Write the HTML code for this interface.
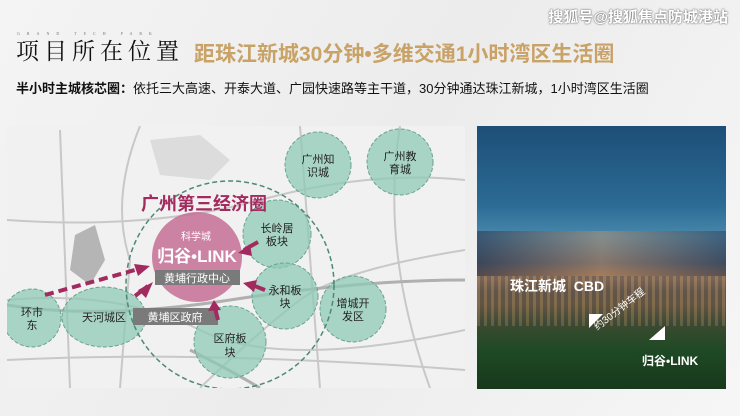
<!DOCTYPE html>
<html><head><meta charset="utf-8"><style>
*{margin:0;padding:0;box-sizing:border-box}
body{width:740px;height:416px;overflow:hidden;background:linear-gradient(120deg,#f4f4f4,#ececec 50%,#f6f6f6);font-family:"Liberation Sans","Noto Sans CJK SC",sans-serif;position:relative}
.wm{position:absolute;right:12px;top:6px;color:#fff;font-size:15px;font-weight:bold;text-shadow:0 0 2px #777,0 0 1px #555}
.gtp{position:absolute;left:17px;top:31px;font-size:4px;letter-spacing:7px;color:#777;font-family:"Liberation Serif",serif}
.t1{position:absolute;left:16px;top:37px;font-family:"Liberation Serif","Noto Serif CJK SC",serif;font-size:23px;letter-spacing:5px;color:#111;line-height:30px}
.t2{position:absolute;left:194px;top:40px;font-size:21px;font-weight:bold;color:#c8a266;line-height:30px;white-space:nowrap}
.t3{position:absolute;left:16px;top:78px;font-size:13px;color:#111;white-space:nowrap}
.map{position:absolute;left:7px;top:126px;width:458px;height:262px;background:#f2f2f2;overflow:hidden}
.photo{position:absolute;left:477px;top:126px;width:249px;height:263px;overflow:hidden;
background:linear-gradient(180deg,#1d4e78 0%,#2b6b94 30%,#4a88ac 42%,#4e6478 52%,#8a6e58 58%,#6a5a4a 63%,#6a5a40 68%,#3a4a30 76%,#1f4a24 85%,#17381c 100%)}
</style></head><body>
<div class="wm">搜狐号@搜狐焦点防城港站</div>
<div class="gtp">GRAND TECH PARK</div>
<div class="t1">项目所在位置</div>
<div class="t2">距珠江新城30分钟•多维交通1小时湾区生活圈</div>
<div class="t3"><b>半小时主城核芯圈：</b>依托三大高速、开泰大道、广园快速路等主干道，30分钟通达珠江新城，1小时湾区生活圈</div>

<div class="map">
<svg width="458" height="262" viewBox="7 126 458 262" xmlns="http://www.w3.org/2000/svg" font-family="Liberation Sans,Noto Sans CJK SC,sans-serif">
<rect x="7" y="126" width="458" height="262" fill="#f1f1f1"/>
<path d="M150 140 L200 135 L230 160 L210 180 L160 175 Z" fill="#dcdcdc"/>
<path d="M75 235 L95 225 L105 260 L90 285 L70 270 Z" fill="#b5b5b5"/>
<g stroke="#c8c8c8" stroke-width="2" fill="none">
<path d="M7 300 Q120 290 200 330 T465 330"/><path d="M60 130 L70 388"/><path d="M140 126 Q110 200 130 260 L120 388"/>
<path d="M7 220 Q150 230 260 200 T465 180"/><path d="M200 388 Q260 330 300 300 T465 250"/><path d="M300 126 L320 388"/>
<path d="M7 360 Q200 350 465 370"/><path d="M400 126 Q380 250 430 388"/>
</g>
<g stroke="#b0b0b0" stroke-width="3" fill="none"><path d="M7 305 Q100 320 230 300 T465 280"/><path d="M190 350 Q230 370 260 388"/></g>
<g fill="#8fcab6" fill-opacity="0.75" stroke="#6ba38f" stroke-dasharray="4 2">
<circle cx="318" cy="165" r="33"/><circle cx="400" cy="162" r="33"/>
<circle cx="277" cy="234" r="34"/><circle cx="285" cy="296" r="33"/><circle cx="353" cy="309" r="33"/>
<circle cx="230" cy="342" r="36"/><ellipse cx="104" cy="317" rx="42" ry="30"/><circle cx="32" cy="318" r="29"/>
</g>
<circle cx="230" cy="285" r="104" fill="none" stroke="#4c8a72" stroke-width="1.5" stroke-dasharray="5 3"/>
<circle cx="197" cy="257" r="45" fill="#c56f95" fill-opacity="0.85"/>
<text x="141" y="210" font-size="18" font-weight="bold" fill="#a32a5e">广州第三经济圈</text>
<text x="196" y="240" font-size="10" fill="#fff" text-anchor="middle">科学城</text>
<text x="197" y="262" font-size="17" font-weight="bold" fill="#fff" text-anchor="middle">归谷•LINK</text>
<rect x="155" y="270" width="85" height="15" fill="#7a7a7a"/>
<text x="197" y="282" font-size="11" fill="#fff" text-anchor="middle">黄埔行政中心</text>
<rect x="133" y="308" width="85" height="17" fill="#7a7a7a"/>
<text x="175" y="321" font-size="11" fill="#fff" text-anchor="middle">黄埔区政府</text>
<g font-size="11" fill="#222" text-anchor="middle">
<text x="318" y="163">广州知</text><text x="318" y="176">识城</text>
<text x="400" y="160">广州教</text><text x="400" y="173">育城</text>
<text x="277" y="232">长岭居</text><text x="277" y="245">板块</text>
<text x="285" y="294">永和板</text><text x="285" y="307">块</text>
<text x="353" y="307">增城开</text><text x="353" y="320">发区</text>
<text x="230" y="342">区府板</text><text x="230" y="356">块</text>
<text x="104" y="321">天河城区</text>
<text x="32" y="316">环市</text><text x="32" y="329">东</text>
</g>
<g stroke="#a32a5e" stroke-width="4" fill="#a32a5e">
<path d="M45 295 L135 270" stroke-dasharray="9 5" fill="none"/>
<path d="M135 296 L148 286" fill="none"/><path d="M258 242 L244 250" fill="none"/>
<path d="M265 290 L252 285" fill="none"/><path d="M218 320 L215 308" fill="none"/>
</g>
<g fill="#a32a5e">
<path d="M150 266 L134 264 L138 276 Z"/><path d="M153 282 L138 290 L146 298 Z"/>
<path d="M238 253 L250 244 L252 256 Z"/><path d="M243 283 L257 280 L254 292 Z"/>
<path d="M214 300 L208 311 L221 310 Z"/>
</g>
</svg>
</div>

<div class="photo">
<div style="position:absolute;left:0;top:105px;width:249px;height:45px;background:linear-gradient(90deg,rgba(40,40,60,.5),rgba(240,150,80,.35),rgba(40,40,60,.4))"></div>
<div style="position:absolute;left:0;top:150px;width:249px;height:50px;background:repeating-linear-gradient(90deg,rgba(200,160,110,.25) 0 3px,rgba(60,60,70,.2) 3px 7px)"></div>
<div style="position:absolute;left:33px;top:150px;color:#fff;font-weight:bold;font-size:14px">珠江新城&nbsp; CBD</div>
<div style="position:absolute;left:113px;top:195px;color:#fff;font-size:10px;transform:rotate(-38deg);transform-origin:left top">约30分钟车程</div>
<div style="position:absolute;left:112px;top:188px;width:0;height:0;border-top:14px solid #fff;border-right:14px solid transparent"></div>
<div style="position:absolute;left:172px;top:200px;width:0;height:0;border-bottom:14px solid #fff;border-left:16px solid transparent"></div>
<div style="position:absolute;left:165px;top:226px;color:#fff;font-weight:bold;font-size:12px">归谷•LINK</div>
</div>
</body></html>
